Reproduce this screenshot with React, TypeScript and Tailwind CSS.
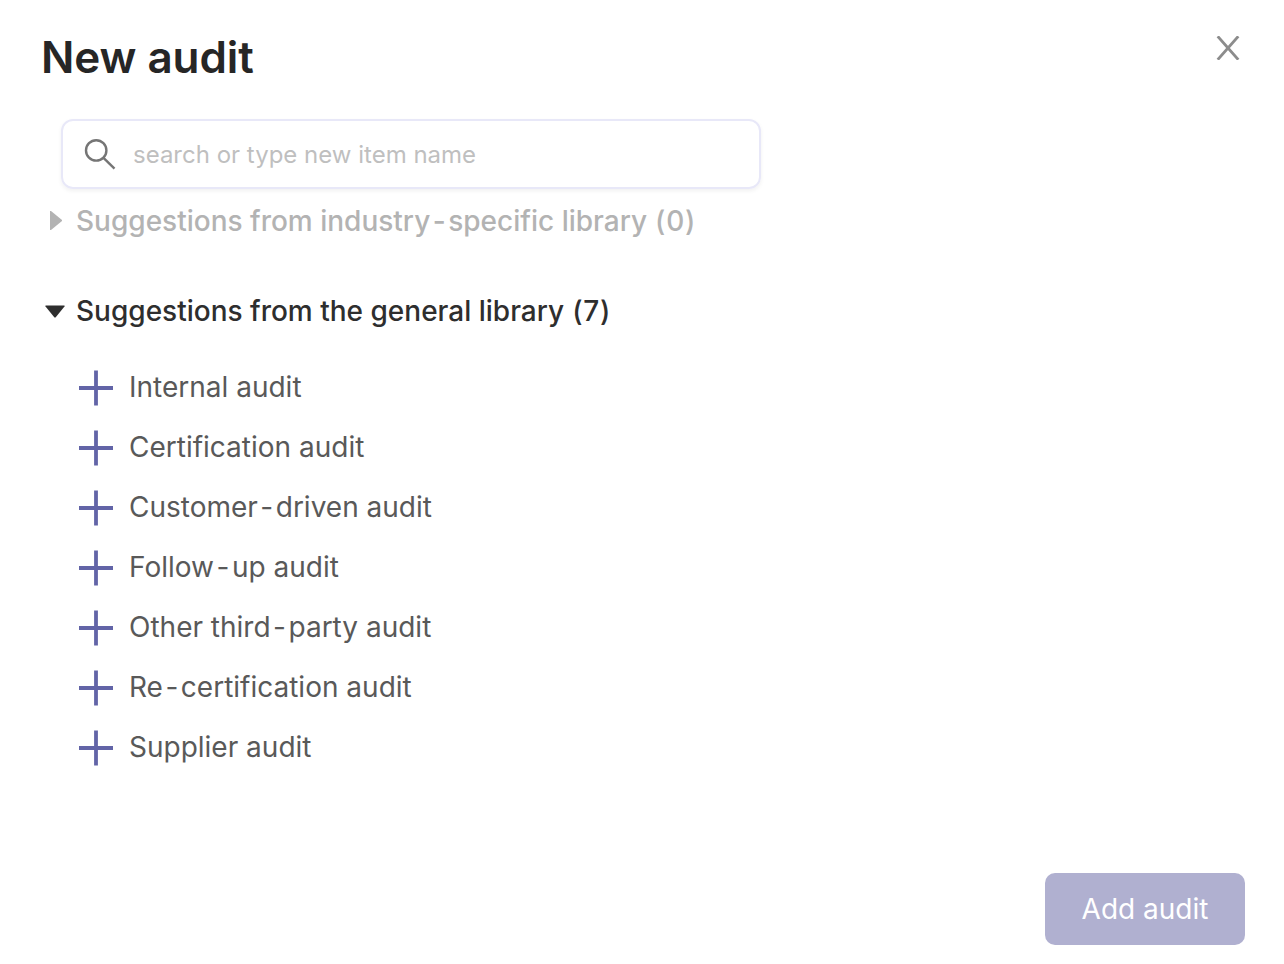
import { Fragment, useState } from "react";

interface SectionProps {
    title: string;
    items: string[];
    defaultOpen?: boolean;
}

// Gives hyphens a bit of room on both sides
const Label = ({ text }: { text: string }) => (
    <span className="whitespace-nowrap">
        {text.split("-").map((part, i) => (
            <Fragment key={i}>
                {i > 0 && <span className="inline-block mx-[2.5px]">-</span>}
                {part}
            </Fragment>
        ))}
    </span>
);

const PlusIcon = () => (
    <svg className="w-9 h-9 shrink-0" viewBox="0 0 36 36" fill="none" stroke="#6264a7" strokeWidth="3.8">
        <path d="M18 0.5V35.5M1 18H35" />
    </svg>
);

const Section: React.FC<SectionProps> = ({ title, items, defaultOpen = false }) => {
    const [open, setOpen] = useState(defaultOpen);
    const empty = items.length === 0;

    return (
        <section>
            <button
                disabled={empty}
                onClick={() => setOpen(!open)}
                className={`flex items-center h-10 text-[28px] font-medium whitespace-nowrap ${empty ? "text-[#b3b3b3]" : "text-[#2e2e2e]"}`}
            >
                <svg className="w-5 h-5 mr-[11px]" viewBox="0 0 20 20" fill="currentColor">
                    {open ? <path d="M0.5 4.5H19.5V5.5L10.5 16.5H9.5L0.5 5.5Z" /> : <path d="M5 0H6L17 9V10L6 19H5Z" />}
                </svg>
                <Label text={title} />
                <span className="ml-2 tracking-[0.8px]">({items.length})</span>
            </button>
            {open && (
                <ul className="pt-[27px] pl-[33px]">
                    {items.map((item) => (
                        <li key={item} className="flex items-center h-[60px] gap-[15px] text-[28px] text-[#595959]">
                            <PlusIcon />
                            <span className="pb-0.5">
                                <Label text={item} />
                            </span>
                        </li>
                    ))}
                </ul>
            )}
        </section>
    );
};

const generalItems = [
    "Internal audit",
    "Certification audit",
    "Customer-driven audit",
    "Follow-up audit",
    "Other third-party audit",
    "Re-certification audit",
    "Supplier audit",
];

const App = () => {
    return (
        <div className="flex flex-col w-[1284px] h-[964px] bg-white font-['Inter',sans-serif]">
            <header className="flex items-start justify-between h-[119px] pt-8 pl-[41px] pr-11">
                <h1 className="text-[44px] leading-[50px] font-semibold tracking-[-0.1px] text-[#262626]">New audit</h1>
                <button aria-label="Close" className="mt-1">
                    <svg className="w-6 h-6" viewBox="0 0 24 24" fill="none" stroke="#8c8c8c" strokeWidth="2.8">
                        <path d="M1.7 0.3L22.3 23.7M22.3 0.3L1.7 23.7" />
                    </svg>
                </button>
            </header>
            <div className="flex items-center w-[700px] h-[70px] ml-[61px] px-[21px] shrink-0 rounded-xl border-2 border-[#e8e8f8] shadow-[0_2px_4px_rgba(0,0,0,0.06)]">
                <svg className="w-8 h-8 shrink-0" viewBox="0 0 32 32" fill="none" stroke="#757575" strokeWidth="2.4">
                    <circle cx="12.2" cy="12.4" r="10.2" />
                    <path d="M19.5 19.8L30.5 30.6" />
                </svg>
                <input
                    className="flex-1 ml-[17px] pt-0.5 text-2xl outline-none placeholder:text-[#bfbfbf]"
                    placeholder="search or type new item name"
                />
            </div>
            <main className="flex flex-col flex-1 gap-[50px] pl-[45px] pt-3">
                <Section title="Suggestions from industry-specific library" items={[]} />
                <Section title="Suggestions from the general library" items={generalItems} defaultOpen />
            </main>
            <footer className="flex justify-end pr-[39px] pb-[19px]">
                <button className="w-[200px] h-[72px] rounded-[10px] bg-[#b0b0d0] text-[28px] text-white">
                    Add audit
                </button>
            </footer>
        </div>
    );
};

export default App;
